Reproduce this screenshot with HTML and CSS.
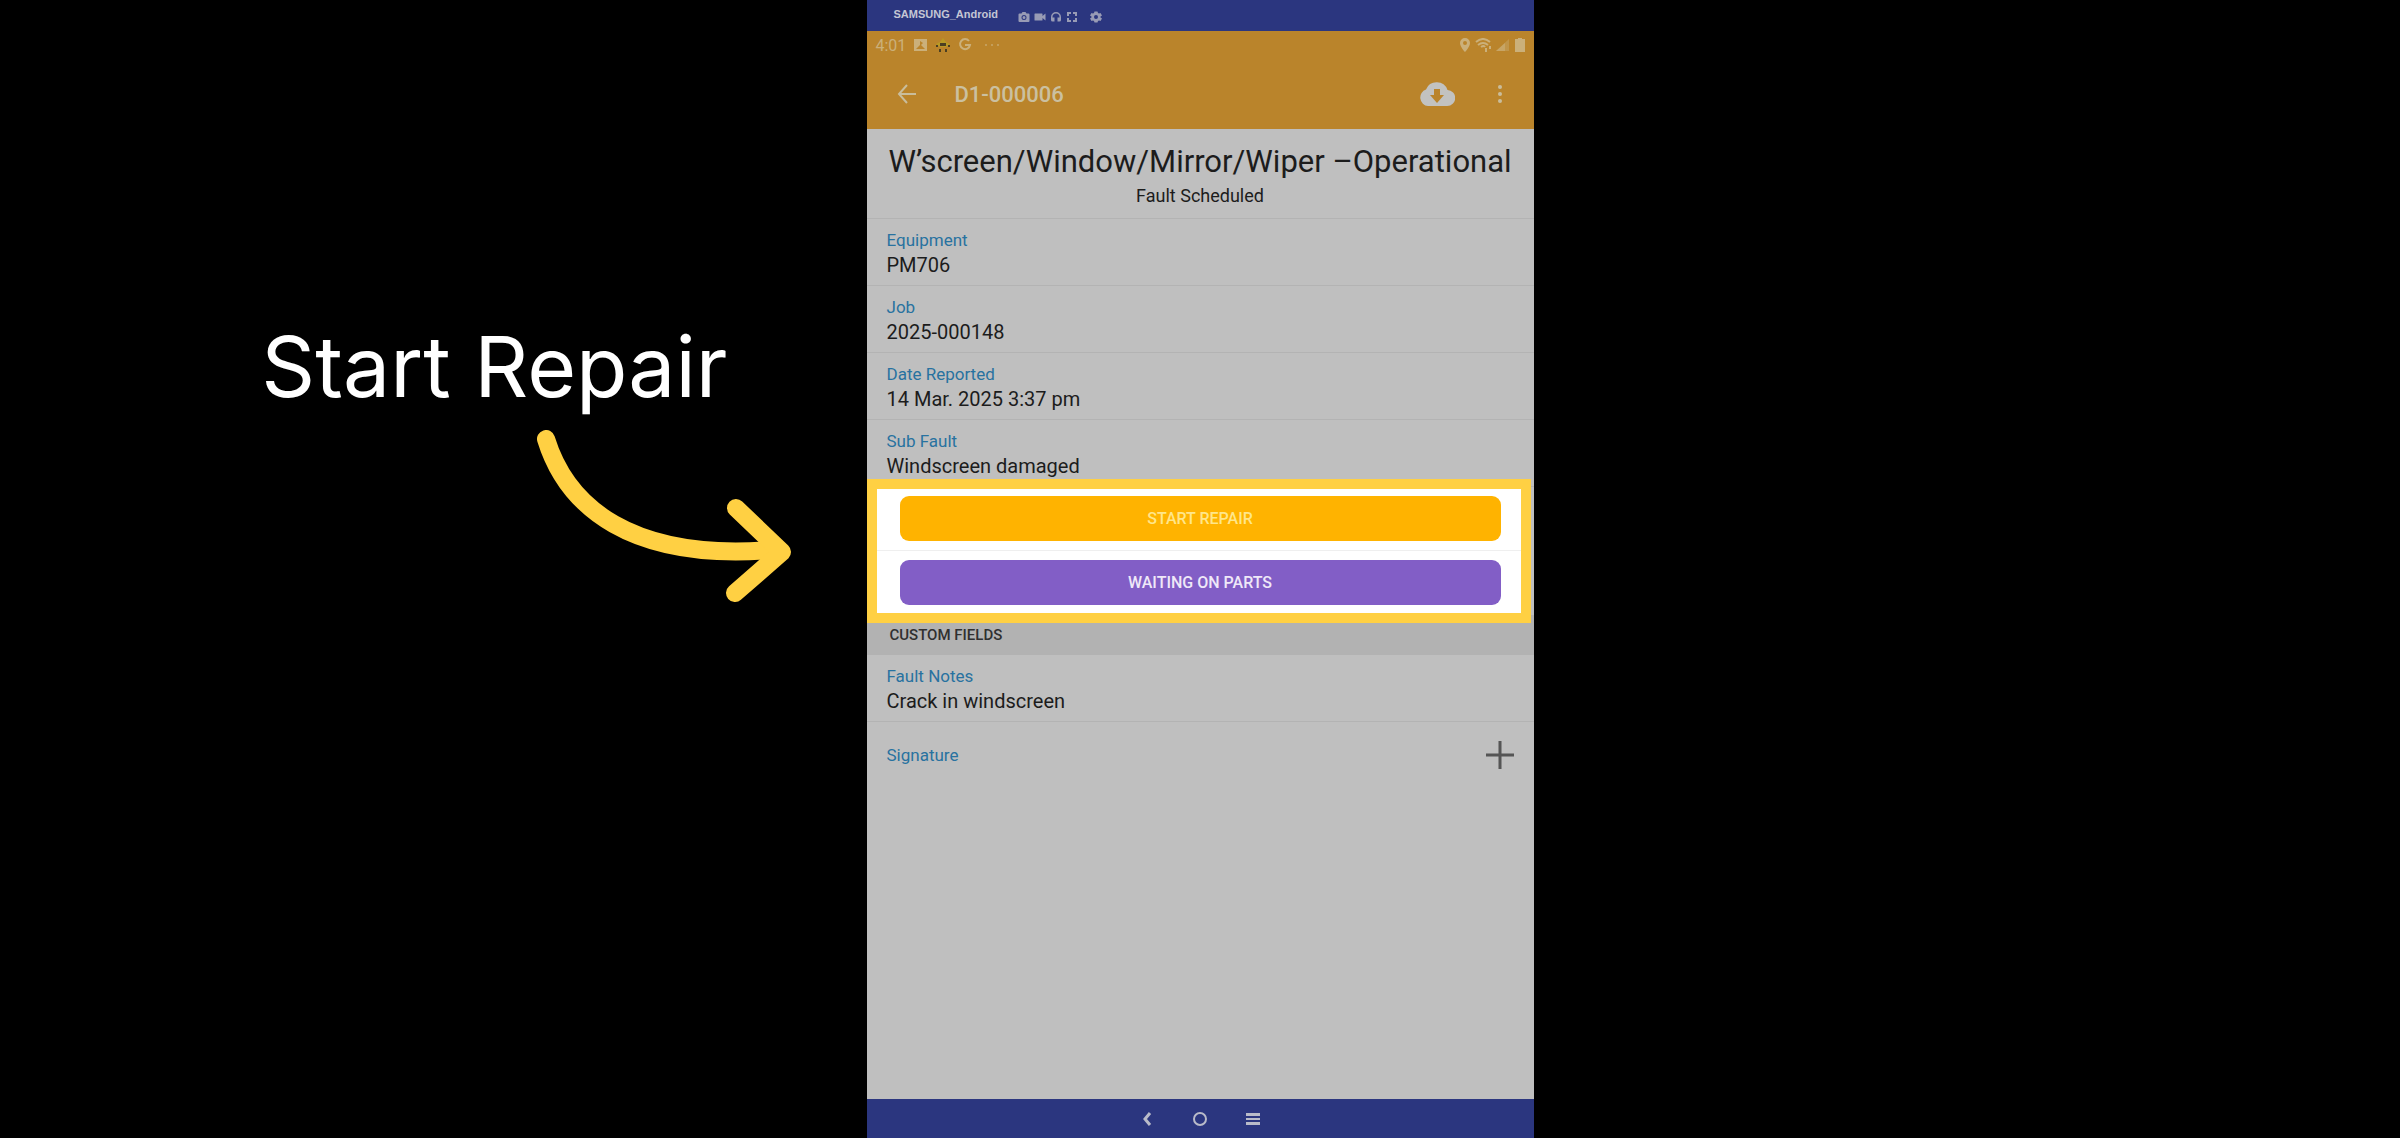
FILE: index.html
```html
<!DOCTYPE html>
<html lang="en">
<head>
  <meta charset="UTF-8" />
  <meta name="viewport" content="width=device-width, initial-scale=1.0"/>
  <title>Start Repair</title>
  <link rel="stylesheet" href="styles.css">
</head>
<body>

  <main class="slide">
    <!-- Caption and arrow -->
    <section class="callout">
      <h1>Start Repair</h1>
      <svg class="arrow" viewBox="0 0 256 172" aria-hidden="true">
        <path d="M10 9C31 77 95 131 235 120"/>
        <path d="M200 78L246 122L199 163"/>
      </svg>
    </section>

    <!-- Phone -->
    <div class="phone">
      <div class="mirror-bar">
        <span class="device">SAMSUNG_Android</span>
        <div class="mirror-icons">
          <svg viewBox="0 0 24 24"><path fill-rule="evenodd" d="M9 2 7 5H3a2 2 0 0 0-2 2v13a2 2 0 0 0 2 2h18a2 2 0 0 0 2-2V7a2 2 0 0 0-2-2h-4l-2-3zm3 6a5 5 0 1 1 0 10 5 5 0 0 1 0-10zm0 2a3 3 0 1 0 0 6 3 3 0 0 0 0-6z"/></svg>
          <svg viewBox="0 0 24 24"><path d="M17 10V6a1 1 0 0 0-1-1H2a1 1 0 0 0-1 1v12a1 1 0 0 0 1 1h14a1 1 0 0 0 1-1v-4l6 5V5z"/></svg>
          <svg viewBox="0 0 24 24"><path d="M12 2a10 10 0 0 0-10 10v6a3 3 0 0 0 3 3h4v-8H5v-1a7 7 0 0 1 14 0v1h-4v8h4a3 3 0 0 0 3-3v-6A10 10 0 0 0 12 2z"/></svg>
          <svg viewBox="0 0 24 24"><path d="M2 2h8v4H6v4H2zM14 2h8v8h-4V6h-4zM2 14h4v4h4v4H2zM18 14h4v8h-8v-4h4z"/></svg>
          <svg class="gear" viewBox="0 0 24 24"><path fill-rule="evenodd" d="M9 1h6l1 3 2 1 3-1 3 5-3 2v2l3 2-3 5-3-1-2 1-1 3H9l-1-3-2-1-3 1-3-5 3-2v-2L0 9l3-5 3 1 2-1zM12 8a4 4 0 1 0 0 8 4 4 0 0 0 0-8z"/></svg>
        </div>
      </div>

      <header class="app-header">
        <div class="status-bar">
          <span>4:01</span>
          <svg width="15" height="14" viewBox="0 0 15 14"><path fill-rule="evenodd" d="M1 1h13v12H1zM7 3l3 2-2 2 4 4H3l4-4z"/></svg>
          <svg width="16" height="14" viewBox="0 0 16 14"><path class="bee-wing" d="M8 0l3 4 4 2-4 3H5L1 6l4-2z"/><path class="bee-body" d="M5 5h6v3H5zM1 7h2v2H1zM13 7h2v2h-2zM4 11h2v3H4zM10 11h2v3h-2z"/></svg>
          <svg class="google" width="14" height="14" viewBox="0 0 14 14"><path d="M11 3A5 5 0 1 0 12 7H7"/></svg>
          <svg class="more-dots" width="14" height="4" viewBox="0 0 14 4"><path d="M0 1h2v2H0zM6 1h2v2H6zM12 1h2v2h-2z"/></svg>
          <div class="status-right">
            <svg width="12" height="14" viewBox="0 0 12 14"><path fill-rule="evenodd" d="M6 0a5 5 0 0 1 5 5c0 4-5 9-5 9S1 9 1 5a5 5 0 0 1 5-5zm0 3a2 2 0 1 0 0 4 2 2 0 0 0 0-4z"/></svg>
            <svg class="wifi" width="17" height="14" viewBox="0 0 17 14"><path d="M1 4q7-6 14 0M3 7q5-4 10 0M6 9q3-2 4 0M11 10v4M15 8v3"/></svg>
            <svg width="14" height="14" viewBox="0 0 14 14"><path class="faint" d="M0 13 13 1v12z"/><path class="dim" d="M0 13 9 5v8z"/></svg>
            <svg width="12" height="14" viewBox="0 0 12 14"><path d="M4 0h4v1h3v13H1V1h3z"/></svg>
          </div>
        </div>
        <div class="app-bar">
          <button class="icon-btn" aria-label="Back">
            <svg class="back" width="20" height="20" viewBox="0 0 20 20"><path d="M19 10H2M10 1L2 10L10 19"/></svg>
          </button>
          <h2>D1-000006</h2>
          <button class="icon-btn download" aria-label="Download">
            <svg width="36" height="26" viewBox="0 0 36 26"><path fill-rule="evenodd" d="M9 25A8.500 8.500 0 0 1 7 8.500 11.500 11.500 0 0 1 28.500 9 8 8 0 0 1 28 25zM15 8v6h-4l7 8 7-8h-4V8z"/></svg>
          </button>
          <button class="icon-btn" aria-label="More">
            <svg width="6" height="20" viewBox="0 0 6 20"><circle cx="3" cy="3" r="2"/><circle cx="3" cy="10" r="2"/><circle cx="3" cy="17" r="2"/></svg>
          </button>
        </div>
      </header>

      <div class="fault-title">
        <h3>W’screen/Window/Mirror/Wiper –Operational</h3>
        <p>Fault Scheduled</p>
      </div>

      <dl class="fields">
        <div class="field"><dt>Equipment</dt><dd>PM706</dd></div>
        <div class="field"><dt>Job</dt><dd>2025-000148</dd></div>
        <div class="field"><dt>Date Reported</dt><dd>14 Mar. 2025 3:37 pm</dd></div>
        <div class="field"><dt>Sub Fault</dt><dd>Windscreen damaged</dd></div>
      </dl>

      <div class="actions">
        <div class="action-row"><button class="btn start">START REPAIR</button></div>
        <div class="action-row"><button class="btn waiting">WAITING ON PARTS</button></div>
      </div>

      <h4 class="section-title">CUSTOM FIELDS</h4>
      <dl class="fields">
        <div class="field"><dt>Fault Notes</dt><dd>Crack in windscreen</dd></div>
      </dl>
      <div class="signature">
        <span>Signature</span>
        <button class="icon-btn" aria-label="Add signature">
          <svg class="plus" width="28" height="28" viewBox="0 0 28 28"><path d="M14 0v28M0 14h28"/></svg>
        </button>
      </div>

      <nav class="nav-bar">
        <button class="icon-btn" aria-label="Back">
          <svg class="nav-back" width="14" height="14" viewBox="0 0 14 14"><path d="M10 1L5 7L10 13"/></svg>
        </button>
        <button class="icon-btn" aria-label="Home">
          <svg class="nav-home" width="14" height="14" viewBox="0 0 14 14"><circle cx="7" cy="7" r="6"/></svg>
        </button>
        <button class="icon-btn" aria-label="Recent apps">
          <svg width="14" height="14" viewBox="0 0 14 14"><path d="M0 1h14v3H0zM0 6h14v2H0zM0 10h14v3H0z"/></svg>
        </button>
      </nav>
    </div>
  </main>

</body>
</html>
```
FILE: styles.css
```css
:root {
  --bar-blue: #2b367f;
  --app-orange: #ba842b;
  --screen: #bfbfbf;
  --line: #b3b3b3;
  --label: #2872a0;
  --text: #1c1c1c;
  --highlight: #ffd043;
}

* {
  box-sizing: border-box;
}

body {
  margin: 0;
  background-color: #000;
  color: var(--text);
  font-family: Roboto, sans-serif;
}

h1, h2, h3, h4, p, dl, dd {
  margin: 0;
  font-weight: 400;
}

svg {
  display: block;
  fill: currentColor;
}

button {
  font-family: inherit;
  border: none;
  cursor: pointer;
}

.slide {
  display: grid;
  grid-template-columns: 1fr minmax(auto, 667px) 1fr;
  min-height: 100vh;
}

/* Caption */
.callout {
  display: flex;
  flex-direction: column;
  align-items: flex-end;
  gap: 10px;
  padding: 314px 75px 0 0;
}

.callout h1 {
  margin-right: 64px;
  color: white;
  font-family: Inter, sans-serif;
  font-size: 84px;
  line-height: 106px;
  white-space: nowrap;
}

.arrow {
  width: 256px;
  fill: none;
  stroke: var(--highlight);
  stroke-width: 18px;
  stroke-linecap: round;
  stroke-linejoin: round;
}

/* Phone */
.phone {
  display: flex;
  flex-direction: column;
  background-color: var(--screen);
}

.mirror-bar {
  display: flex;
  align-items: center;
  gap: 20px;
  height: 31px;
  padding-left: 27px;
  background-color: var(--bar-blue);
  color: #c4c6d4;
}

.device {
  padding-bottom: 4px;
  font: bold 11px "Liberation Sans", sans-serif;
}

.mirror-icons {
  display: flex;
  gap: 4px;
  padding-top: 2px;
  color: #989bb5;
}

.mirror-icons svg {
  width: 12px;
  height: 12px;
}

.mirror-icons .gear {
  margin-left: 8px;
}

.app-header {
  background-color: var(--app-orange);
  color: #c9bd9c;
}

.status-bar {
  display: flex;
  align-items: center;
  gap: 7px;
  height: 28px;
  padding: 0 8px 0 9px;
  color: #cbb07a;
  font-size: 16px;
}

.status-right {
  display: flex;
  gap: 4px;
  margin-left: auto;
}

.bee-wing {
  fill: #b99a24;
}

.bee-body {
  fill: #4b3f22;
}

.google, .wifi {
  fill: none;
  stroke: currentColor;
  stroke-width: 2px;
}

.more-dots {
  margin-left: 6px;
  opacity: 0.6;
}

.faint {
  opacity: 0.4;
}

.dim {
  opacity: 0.6;
}

.app-bar {
  display: flex;
  align-items: center;
  height: 70px;
  padding: 0 31px 0 30px;
}

.app-bar h2 {
  margin-left: 38px;
  color: #cbc0a0;
  font-size: 22px;
  font-weight: 500;
}

.app-bar .download {
  margin-left: auto;
  margin-right: 42px;
  color: #c2c2c0;
}

.icon-btn {
  padding: 0;
  background: none;
  color: inherit;
}

.back {
  fill: none;
  stroke: currentColor;
  stroke-width: 2px;
}

.fault-title {
  padding: 13px 16px 8px;
  border-bottom: 1px solid var(--line);
  text-align: center;
}

.fault-title h3 {
  font-size: 31px;
  line-height: 40px;
}

.fault-title p {
  font-size: 18px;
  line-height: 28px;
}

.field {
  padding: 8px 20px;
  border-bottom: 1px solid var(--line);
}

.field dt {
  color: var(--label);
  font-size: 17px;
  line-height: 26px;
}

.field dd {
  font-size: 20px;
  line-height: 24px;
}

/* Highlighted buttons */
.actions {
  position: relative;
  padding-right: 3px;
}

.actions::after {
  content: "";
  position: absolute;
  inset: -8px 3px -8px 0;
  border: 10px solid var(--highlight);
  pointer-events: none;
}

.action-row {
  padding: 9px 30px 9px 33px;
  border-bottom: 1px solid #efefef;
  background-color: white;
}

.btn {
  display: block;
  width: 100%;
  height: 45px;
  border-radius: 9px;
  font-size: 16px;
  font-weight: 500;
}

.start {
  background-color: #ffb300;
  color: #ffe68a;
}

.waiting {
  background-color: #825ec6;
  color: #efe8f8;
}

.section-title {
  padding-left: 23px;
  background-color: #b2b2b2;
  color: #303030;
  font-size: 15px;
  font-weight: 500;
  line-height: 40px;
}

.signature {
  display: flex;
  align-items: center;
  justify-content: space-between;
  height: 66px;
  padding: 0 20px;
  color: var(--label);
  font-size: 17px;
}

.plus {
  fill: none;
  stroke: #555;
  stroke-width: 3px;
}

.nav-bar {
  display: flex;
  align-items: center;
  justify-content: center;
  gap: 39px;
  height: 39px;
  margin-top: auto;
  background-color: var(--bar-blue);
  color: #b9bbc9;
}

.nav-back, .nav-home {
  fill: none;
  stroke: currentColor;
  stroke-width: 2px;
}

.nav-back {
  stroke-width: 3px;
}
```
